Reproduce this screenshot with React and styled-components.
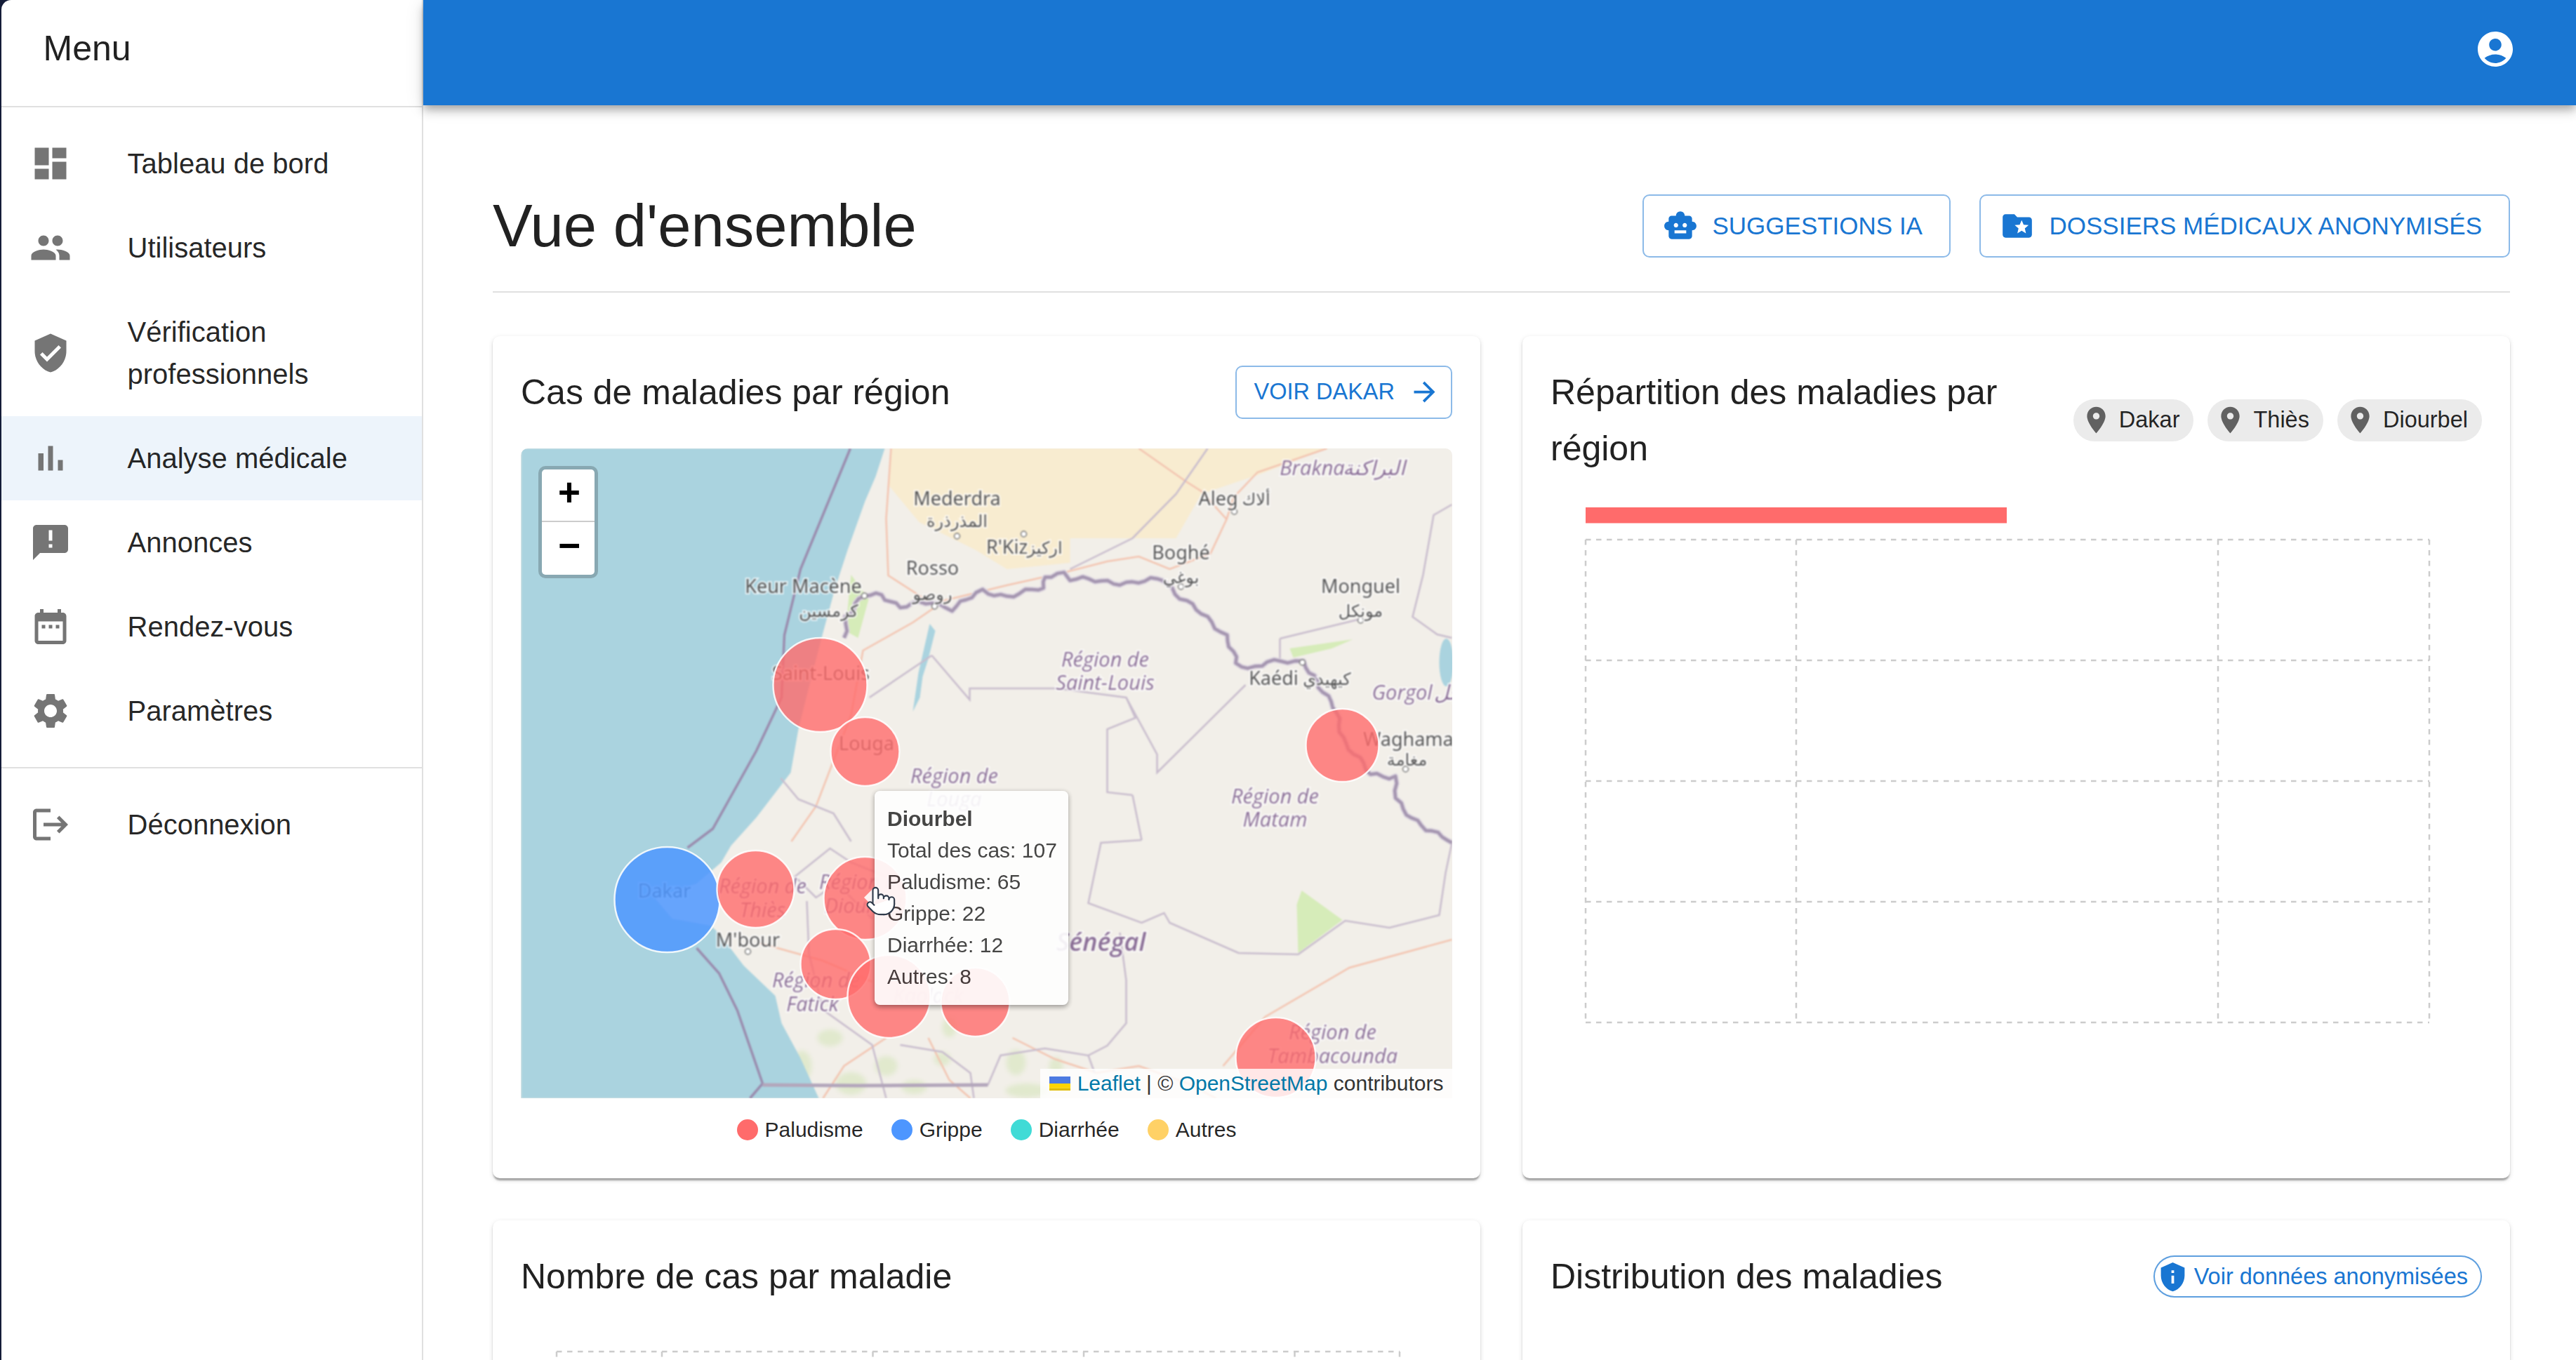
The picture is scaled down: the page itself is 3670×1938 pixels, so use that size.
import styled, { createGlobalStyle } from "styled-components";
import { Pointer } from "lucide-react";

const GlobalStyle = createGlobalStyle`
    html, body {
        margin: 0;
        padding: 0;
        height: 100%;
        background: #141c38;
        font-family: "Liberation Sans", Arial, sans-serif;
        overflow: hidden;
    }
`;

const BLUE = "#1976d2";

const Page = styled.div`
    display: flex;
    height: 1938px;
    margin-left: 1.5px;
    background: #fff;
    border-top-left-radius: 14px;
    overflow: hidden;
`;
const Sidebar = styled.aside`
    flex: 0 0 601.5px;
    box-sizing: border-box;
    border-right: 2.5px solid rgba(0, 0, 0, 0.12);
    color: rgba(0, 0, 0, 0.87);
`;
const MenuHead = styled.div`
    box-sizing: border-box;
    height: 152.5px;
    padding: 0 0 12.5px 60px;
    display: flex;
    align-items: center;
    font-size: 50px;
    border-bottom: 2.5px solid rgba(0, 0, 0, 0.12);
`;
const NavList = styled.nav`
    padding: 20px 0;
    border-bottom: ${(p) => (p.$last ? "none" : "2.5px solid rgba(0, 0, 0, 0.12)")};
`;
const NavItem = styled.div`
    display: flex;
    align-items: center;
    min-height: 120px;
    box-sizing: border-box;
    padding: 30px 40px;
    background: ${(p) => (p.$active ? "#edf4fb" : "transparent")};
`;
const NavIcon = styled.svg`
    flex: 0 0 60px;
    width: 60px;
    height: 60px;
    margin-right: 80px;
    fill: #757575;
`;
const NavText = styled.span`
    flex: 1;
    font-size: 40px;
    line-height: 60px;
`;

const Main = styled.main`
    flex: 1;
    min-width: 0;
    display: flex;
    flex-direction: column;
`;
const AppBar = styled.header`
    flex: 0 0 150px;
    box-sizing: border-box;
    background: ${BLUE};
    display: flex;
    justify-content: flex-end;
    padding: 40px 85px 0 0;
    box-shadow: 0 5px 10px -2.5px rgba(0, 0, 0, 0.2), 0 10px 12.5px 0 rgba(0, 0, 0, 0.14),
        0 2.5px 25px 0 rgba(0, 0, 0, 0.12);
    position: relative;
    z-index: 2;
`;
const AccountIcon = styled.svg`
    width: 60px;
    height: 60px;
    fill: #fff;
`;
const Content = styled.div`
    padding: 127px 94px 0 99px;
`;
const TitleRow = styled.div`
    display: flex;
    align-items: center;
    justify-content: space-between;
    padding-bottom: 48px;
    border-bottom: 2.5px solid rgba(0, 0, 0, 0.12);
    margin-bottom: 61.5px;
`;
const PageTitle = styled.h1`
    margin: 0;
    font-size: 85px;
    font-weight: 400;
    line-height: 90px;
    color: rgba(0, 0, 0, 0.87);
`;
const Actions = styled.div`
    display: flex;
    gap: 41px;
`;
const OutlineButton = styled.div`
    display: inline-flex;
    align-items: center;
    box-sizing: border-box;
    height: ${(p) => (p.$small ? "76px" : "90px")};
    padding: ${(p) => (p.$small ? "0 25px" : "0 38px 0 37.5px")};
    border: 2.5px solid rgba(25, 118, 210, 0.5);
    border-radius: 10px;
    color: ${BLUE};
    font-size: ${(p) => (p.$small ? "32.5px" : "35px")};
    white-space: nowrap;
`;
const ButtonIcon = styled.svg`
    width: 50px;
    height: 50px;
    margin: 0 20px 0 -10px;
    fill: ${BLUE};
`;
const ArrowIcon = styled.svg`
    width: 45px;
    height: 45px;
    margin: 0 -10px 0 20px;
    fill: ${BLUE};
`;

const CardGrid = styled.div`
    display: grid;
    grid-template-columns: 1fr 1fr;
    gap: 60px;
`;
const Card = styled.section`
    height: 1200.5px;
    box-sizing: border-box;
    padding: 40px;
    background: #fff;
    border-radius: 10px;
    box-shadow: 0 5px 2.5px -2.5px rgba(0, 0, 0, 0.2), 0 2.5px 2.5px 0 rgba(0, 0, 0, 0.14),
        0 2.5px 7.5px 0 rgba(0, 0, 0, 0.12);
`;
const CardHead = styled.div`
    display: flex;
    align-items: center;
    justify-content: space-between;
    gap: 40px;
    margin-bottom: 40px;
`;
const CardTitle = styled.h2`
    margin: 0;
    font-size: 50px;
    font-weight: 400;
    line-height: 80px;
    color: rgba(0, 0, 0, 0.87);
`;
const ChipRow = styled.div`
    display: flex;
    gap: 20px;
    flex-shrink: 0;
`;
const Chip = styled.div`
    display: inline-flex;
    align-items: center;
    box-sizing: border-box;
    height: 60px;
    border-radius: 30px;
    font-size: 32.5px;
    white-space: nowrap;
    padding-right: ${(p) => (p.$outlined ? "18px" : "20px")};
    background: ${(p) => (p.$outlined ? "#fff" : "#ebebeb")};
    color: ${(p) => (p.$outlined ? BLUE : "rgba(0, 0, 0, 0.87)")};
    border: ${(p) => (p.$outlined ? "2.5px solid rgba(25, 118, 210, 0.7)" : "none")};
`;
const ChipIcon = styled.svg`
    width: 45px;
    height: 45px;
    margin: 0 ${(p) => (p.$outlined ? "8px" : "10px")} 0 ${(p) => (p.$outlined ? "3px" : "10px")};
    fill: ${(p) => (p.$outlined ? BLUE : "#616161")};
`;

const MapBox = styled.div`
    position: relative;
    height: 926px;
    overflow: hidden;
    border-radius: 10px 10px 0 0;
    background: #f2efe9;
`;
const MapSvg = styled.svg`
    display: block;
    width: 100%;
    height: 100%;
`;
const TileLayer = styled.g`
    filter: blur(0.9px);
`;
const GreenPatches = styled.g`
    filter: blur(3px);
    opacity: 0.65;
`;
const TownLabel = styled.text`
    font-family: ${(p) => (p.$ar ? '"DejaVu Sans", sans-serif' : '"Noto Sans", sans-serif')};
    font-size: ${(p) => (p.$ar ? "24px" : "27px")};
    fill: #555;
    stroke: rgba(255, 255, 255, 0.7);
    stroke-width: 4px;
    paint-order: stroke;
    text-anchor: middle;
`;
const RegionLabel = styled.text`
    font-family: "Open Sans", sans-serif;
    font-style: italic;
    font-size: ${(p) => p.$size || 29}px;
    font-weight: ${(p) => (p.$strong ? 600 : 400)};
    fill: #8b6f97;
    stroke: rgba(255, 255, 255, 0.7);
    stroke-width: 4px;
    paint-order: stroke;
    text-anchor: middle;
`;
const ZoomControl = styled.div`
    position: absolute;
    left: 25px;
    top: 25px;
    width: 75px;
    border: 5px solid rgba(0, 0, 0, 0.2);
    border-radius: 10px;
    background: #fff;
    background-clip: padding-box;
`;
const ZoomButton = styled.div`
    height: 75px;
    box-sizing: border-box;
    display: flex;
    align-items: center;
    justify-content: center;
    padding-left: 3px;
    font-family: "Liberation Mono", monospace;
    font-weight: 700;
    font-size: 55px;
    color: #000;
    border-bottom: ${(p) => (p.$top ? "2.5px solid #ccc" : "none")};
`;
const Attribution = styled.div`
    position: absolute;
    right: 0;
    bottom: 0;
    height: 42px;
    display: flex;
    align-items: center;
    padding: 0 12.5px;
    background: rgba(255, 255, 255, 0.8);
    font-size: 30px;
    line-height: 42px;
    color: #333;
    white-space: pre;
`;
const AttrLink = styled.span`
    color: #0078a8;
`;
const Flag = styled.svg`
    width: 30px;
    height: 20px;
    margin-right: 10px;
`;
const Tooltip = styled.div`
    position: absolute;
    left: 504px;
    top: 488px;
    width: 276px;
    height: 305px;
    box-sizing: border-box;
    padding: 17.5px 18px;
    background: #fff;
    border-radius: 7.5px;
    box-shadow: 0 2.5px 7.5px rgba(0, 0, 0, 0.4);
    opacity: 0.9;
    color: #333;
    font-size: 30px;
    line-height: 45px;
    white-space: nowrap;
    &::before {
        content: "";
        position: absolute;
        left: -15px;
        top: 137px;
        border: solid transparent;
        border-width: 15px 15px 15px 0;
        border-right-color: #fff;
    }
`;
const TooltipName = styled.div`
    font-weight: 700;
`;
const HandCursor = styled.div`
    position: absolute;
    left: 490px;
    top: 622px;
    line-height: 0;
`;
const Legend = styled.div`
    display: flex;
    justify-content: center;
    gap: 40px;
    margin-top: 30px;
`;
const LegendItem = styled.div`
    display: flex;
    align-items: center;
    gap: 10px;
    font-size: 30px;
    line-height: 30px;
    color: rgba(0, 0, 0, 0.87);
`;
const LegendDot = styled.span`
    width: 30px;
    height: 30px;
    border-radius: 50%;
    background: ${(p) => p.$color};
`;
const ChartSvg = styled.svg`
    display: block;
    margin-left: ${(p) => p.$left}px;
    margin-top: ${(p) => p.$top || 0}px;
    overflow: visible;
`;
const GridLine = styled.line`
    stroke: #ccc;
    stroke-width: 2.5px;
    stroke-dasharray: 7.5 7.5;
`;

const icons = {
    dashboard: "M3 13h8V3H3v10zm0 8h8v-6H3v6zm10 0h8V11h-8v10zm0-18v6h8V3h-8z",
    people: "M16 11c1.66 0 2.99-1.34 2.99-3S17.66 5 16 5c-1.66 0-3 1.34-3 3s1.34 3 3 3zm-8 0c1.66 0 2.99-1.34 2.99-3S9.66 5 8 5C6.34 5 5 6.34 5 8s1.34 3 3 3zm0 2c-2.33 0-7 1.17-7 3.5V19h14v-2.5c0-2.33-4.67-3.5-7-3.5zm8 0c-.29 0-.62.02-.97.05 1.16.84 1.97 1.97 1.97 3.45V19h6v-2.5c0-2.33-4.67-3.5-7-3.5z",
    verified: "M12 1 3 5v6c0 5.55 3.84 10.74 9 12 5.16-1.26 9-6.45 9-12V5l-9-4zm-2 16-4-4 1.41-1.41L10 14.17l6.59-6.59L18 9l-8 8z",
    bars: "M5 9.2h3V19H5zM10.6 5h2.8v14h-2.8zm5.6 8H19v6h-2.8z",
    announce: "M20 2H4c-1.1 0-1.99.9-1.99 2L2 22l4-4h14c1.1 0 2-.9 2-2V4c0-1.1-.9-2-2-2zm-7 9h-2V5h2v6zm0 4h-2v-2h2v2z",
    event: "M9 11H7v2h2v-2zm4 0h-2v2h2v-2zm4 0h-2v2h2v-2zm2-7h-1V2h-2v2H8V2H6v2H5c-1.11 0-1.99.9-1.99 2L3 20c0 1.1.89 2 2 2h14c1.1 0 2-.9 2-2V6c0-1.1-.9-2-2-2zm0 16H5V9h14v11z",
    settings: "M19.14 12.94c.04-.3.06-.61.06-.94 0-.32-.02-.64-.07-.94l2.03-1.58c.18-.14.23-.41.12-.61l-1.92-3.32c-.12-.22-.37-.29-.59-.22l-2.39.96c-.5-.38-1.03-.7-1.62-.94l-.36-2.54c-.04-.24-.24-.41-.48-.41h-3.84c-.24 0-.43.17-.47.41l-.36 2.54c-.59.24-1.13.57-1.62.94l-2.39-.96c-.22-.08-.47 0-.59.22L2.74 8.87c-.12.21-.08.47.12.61l2.03 1.58c-.05.3-.09.63-.09.94s.02.64.07.94l-2.03 1.58c-.18.14-.23.41-.12.61l1.92 3.32c.12.22.37.29.59.22l2.39-.96c.5.38 1.03.7 1.62.94l.36 2.54c.05.24.24.41.48.41h3.84c.24 0 .44-.17.47-.41l.36-2.54c.59-.24 1.13-.56 1.62-.94l2.39.96c.22.08.47 0 .59-.22l1.92-3.32c.12-.22.07-.47-.12-.61l-2.01-1.58zM12 15.6c-1.98 0-3.6-1.62-3.6-3.6s1.62-3.6 3.6-3.6 3.6 1.62 3.6 3.6-1.62 3.6-3.6 3.6z",
    logout: "m17 7-1.41 1.41L18.17 11H8v2h10.17l-2.58 2.58L17 17l5-5zM4 5h8V3H4c-1.1 0-2 .9-2 2v14c0 1.1.9 2 2 2h8v-2H4V5z",
    account: "M12 2C6.48 2 2 6.48 2 12s4.48 10 10 10 10-4.48 10-10S17.52 2 12 2zm0 4c1.93 0 3.5 1.57 3.5 3.5S13.93 13 12 13s-3.5-1.57-3.5-3.5S10.07 6 12 6zm0 14c-2.03 0-4.43-.82-6.14-2.88C7.55 15.8 9.68 15 12 15s4.45.8 6.14 2.12C16.43 19.18 14.03 20 12 20z",
    robot: "M20 9V7c0-1.1-.9-2-2-2h-3c0-1.66-1.34-3-3-3S9 3.34 9 5H6c-1.1 0-2 .9-2 2v2c-1.66 0-3 1.34-3 3s1.34 3 3 3v4c0 1.1.9 2 2 2h12c1.1 0 2-.9 2-2v-4c1.66 0 3-1.34 3-3s-1.34-3-3-3zM7.5 11.5C7.5 10.67 8.17 10 9 10s1.5.67 1.5 1.5S9.83 13 9 13s-1.5-.67-1.5-1.5zM16 17H8v-2h8v2zm-1-4c-.83 0-1.5-.67-1.5-1.5S14.17 10 15 10s1.5.67 1.5 1.5S15.83 13 15 13z",
    folder: "M20 6h-8l-2-2H4c-1.1 0-1.99.9-1.99 2L2 18c0 1.1.9 2 2 2h16c1.1 0 2-.9 2-2V8c0-1.1-.9-2-2-2zm-2.06 11L15 15.28 12.06 17l.78-3.33-2.59-2.24 3.41-.29L15 8l1.34 3.14 3.41.29-2.59 2.24.78 3.33z",
    arrow: "m12 4-1.41 1.41L16.17 11H4v2h12.17l-5.58 5.59L12 20l8-8z",
    pin: "M12 2C8.13 2 5 5.13 5 9c0 5.25 7 13 7 13s7-7.75 7-13c0-3.87-3.13-7-7-7zm0 9.5c-1.38 0-2.5-1.12-2.5-2.5s1.12-2.5 2.5-2.5 2.5 1.12 2.5 2.5-1.12 2.5-2.5 2.5z",
    privacy: "M12 1 3 5v6c0 5.55 3.84 10.74 9 12 5.16-1.26 9-6.45 9-12V5l-9-4zm1 16h-2v-6h2v6zm0-8h-2V7h2v2z",
};

const navTop = [
    { icon: "dashboard", label: "Tableau de bord" },
    { icon: "people", label: "Utilisateurs" },
    { icon: "verified", label: "Vérification professionnels" },
    { icon: "bars", label: "Analyse médicale", active: true },
    { icon: "announce", label: "Annonces" },
    { icon: "event", label: "Rendez-vous" },
    { icon: "settings", label: "Paramètres" },
];

const NavEntry = ({ icon, label, active }) => (
    <NavItem $active={active}>
        <NavIcon viewBox="0 0 24 24">
            <path d={icons[icon]} />
        </NavIcon>
        <NavText>{label}</NavText>
    </NavItem>
);

// map traced from the picture, coordinates are px inside the 1326x926 map
const path = (pts) => "M" + pts.map((p) => p.join(" ")).join("L");

// the river is a border with lots of small bends, so break up each stretch
const wiggle = (pts, amp) => {
    const out = [];
    let n = 0;
    pts.slice(0, -1).forEach(([x1, y1], i) => {
        const [x2, y2] = pts[i + 1];
        const len = Math.hypot(x2 - x1, y2 - y1);
        const steps = Math.max(1, Math.round(len / 9));
        for (let s = 0; s < steps; s++, n++) {
            const t = s / steps;
            const off = amp * (Math.sin(n * 1.7) + Math.sin(n * 0.63) * 0.7);
            out.push([x1 + (x2 - x1) * t - ((y2 - y1) / len) * off, y1 + (y2 - y1) * t + ((x2 - x1) / len) * off]);
        }
    });
    out.push(pts[pts.length - 1]);
    return path(out.map(([x, y]) => [x.toFixed(1), y.toFixed(1)]));
};

const sea = [
    [0, 0], [518, 0], [505, 40], [490, 75], [465, 145], [447, 200], [428, 270], [410, 340], [395, 400], [384, 462],
    [335, 526], [299, 566], [285, 590], [250, 620], [190, 640], [215, 670], [270, 680], [282, 691], [317, 737],
    [362, 780], [371, 819], [398, 869], [424, 926], [0, 926],
];
const desert = [
    [527, 0], [523, 52], [567, 105], [648, 145], [692, 172], [782, 163], [782, 128], [933, 128], [969, 65], [1049, 38], [1148, 0],
];
const maritime = [
    [[469, 0], [398, 172], [375, 266], [371, 355], [335, 431], [273, 542], [237, 569]],
    [[250, 712], [282, 748], [308, 801], [344, 905], [326, 926]],
];
const river = [
    [460, 270], [462, 240], [467, 235], [489, 210], [514, 208], [540, 226], [585, 219], [612, 228], [657, 204],
    [692, 210], [746, 199], [746, 181], [773, 177], [782, 186], [871, 192], [915, 186], [933, 206], [1005, 266],
    [1018, 306], [1036, 315], [1063, 302], [1112, 306], [1130, 324], [1157, 369], [1175, 420], [1210, 465],
    [1246, 467], [1246, 498], [1255, 516], [1291, 541], [1326, 562],
];
const borders = [
    [[978, 0], [933, 65], [871, 128], [782, 172]],
    [[1326, 80], [1300, 95], [1285, 180], [1270, 240], [1305, 265], [1326, 270]],
    [[1081, 271], [1192, 244]],
    [[1081, 271], [1081, 306]],
    [[585, 295], [639, 358], [639, 342], [764, 342], [862, 355], [875, 384], [835, 400], [835, 490], [871, 494]],
    [[862, 355], [906, 436], [906, 462], [1032, 337]],
    [[585, 295], [496, 355]],
    [[884, 558], [826, 562], [808, 648], [884, 676], [916, 662], [924, 676], [1022, 719], [1107, 721], [1174, 673], [1237, 683], [1308, 665], [1317, 605], [1326, 562]],
    [[853, 690], [862, 758], [862, 819], [835, 851], [808, 865]],
    [[871, 494], [884, 558]],
    [[500, 670], [450, 620], [420, 640], [390, 610], [440, 570], [470, 590], [520, 610]],
    [[407, 645], [410, 720], [430, 800], [500, 850], [520, 926]],
    [[540, 850], [600, 860], [640, 890], [645, 926]],
    [[665, 907], [683, 865], [746, 855], [808, 865], [817, 890]],
    [[370, 470], [395, 500], [445, 520], [470, 560]],
];
const gambia = [[344, 907], [480, 908], [665, 907]];
const roads = [
    [[880, 0], [947, 47], [969, 61], [1005, 101], [982, 150], [924, 172], [880, 154], [835, 161], [773, 177], [692, 195], [585, 221], [523, 181], [520, 100], [527, 0]],
    [[1148, 0], [1049, 34], [1015, 70], [1005, 101]],
    [[590, 226], [558, 248], [487, 288], [470, 380], [420, 510], [385, 560]],
    [[340, 705], [430, 730], [500, 760]],
    [[700, 840], [760, 870], [820, 890], [880, 880], [950, 905], [990, 926]],
    [[1000, 880], [1060, 810], [1180, 740], [1326, 700]],
    [[520, 840], [460, 880], [430, 926]],
    [[580, 840], [610, 900], [640, 926]],
];
const greens = [
    [[470, 180], [495, 215], [480, 270], [462, 260]],
    [[1100, 298], [1155, 285], [1185, 272], [1095, 285]],
    [[1112, 630], [1170, 672], [1107, 719], [1105, 650]],
];
const patches = [
    [400, 880, 14, 22], [440, 840, 18, 12], [470, 905, 22, 16], [520, 880, 16, 14], [560, 910, 18, 10],
    [600, 870, 12, 10], [705, 875, 14, 18], [720, 915, 30, 10], [762, 880, 10, 12], [610, 825, 10, 14],
];
const lake = [[582, 250], [590, 260], [580, 300], [572, 325], [568, 355], [558, 375], [566, 320]];

const towns = [
    { x: 621, y: 81, t: "Mederdra" },
    { x: 621, y: 112, t: "المذرذرة", ar: 1 },
    { x: 692, y: 150, t: "R'Kiz" },
    { x: 746, y: 150, t: "اركيز", ar: 1 },
    { x: 586, y: 180, t: "Rosso" },
    { x: 586, y: 216, t: "روصو", ar: 1 },
    { x: 402, y: 206, t: "Keur Macène" },
    { x: 438, y: 240, t: "كرمسين", ar: 1 },
    { x: 993, y: 81, t: "Aleg" },
    { x: 1047, y: 81, t: "ألاك", ar: 1 },
    { x: 940, y: 158, t: "Boghé" },
    { x: 940, y: 192, t: "بوغي", ar: 1 },
    { x: 1196, y: 206, t: "Monguel" },
    { x: 1196, y: 240, t: "مونكل", ar: 1 },
    { x: 1072, y: 337, t: "Kaédi" },
    { x: 1148, y: 337, t: "كيهيدي", ar: 1 },
    { x: 1264, y: 424, t: "Waghama" },
    { x: 1262, y: 452, t: "مغامة", ar: 1 },
    { x: 323, y: 710, t: "M'bour" },
    { x: 204, y: 640, t: "Dakar" },
    { x: 427, y: 330, t: "Saint-Louis" },
    { x: 492, y: 430, t: "Louga" },
];
const regions = [
    { x: 832, y: 311, t: "Région de" },
    { x: 832, y: 344, t: "Saint-Louis" },
    { x: 617, y: 477, t: "Région de" },
    { x: 617, y: 510, t: "Louga" },
    { x: 1074, y: 506, t: "Région de" },
    { x: 1074, y: 539, t: "Matam" },
    { x: 1127, y: 38, t: "Brakna" },
    { x: 1215, y: 38, t: "البراكنة" },
    { x: 1255, y: 358, t: "Gorgol" },
    { x: 1320, y: 358, t: "جل" },
    { x: 344, y: 634, t: "Région de" },
    { x: 344, y: 668, t: "Thiès" },
    { x: 487, y: 628, t: "Région de" },
    { x: 487, y: 662, t: "Diourbel" },
    { x: 420, y: 768, t: "Région de" },
    { x: 415, y: 802, t: "Fatick" },
    { x: 580, y: 790, t: "Kaolack" },
    { x: 1156, y: 842, t: "Région de" },
    { x: 1156, y: 876, t: "Tambacounda" },
    { x: 826, y: 716, t: "Sénégal", size: 36, strong: 1 },
];
const dots = [
    [621, 125], [716, 122], [589, 225], [489, 210], [1016, 90], [940, 197], [1196, 245], [1113, 305], [1260, 457], [323, 717],
];

const circles = [
    { x: 426, y: 337, r: 67 },
    { x: 490, y: 432, r: 49 },
    { x: 1170, y: 423, r: 52 },
    { x: 208, y: 643, r: 75, c: "#4d96ff" },
    { x: 334, y: 628, r: 55 },
    { x: 490, y: 641, r: 59 },
    { x: 448, y: 735, r: 50 },
    { x: 524, y: 781, r: 59 },
    { x: 647, y: 789, r: 49 },
    { x: 1075, y: 868, r: 57 },
];

const legend = [
    { c: "#ff6b6b", t: "Paludisme" },
    { c: "#4d96ff", t: "Grippe" },
    { c: "#40dbd6", t: "Diarrhée" },
    { c: "#ffd166", t: "Autres" },
];

function RegionMap() {
    return (
        <MapBox>
            <MapSvg viewBox="0 0 1326 926">
                <TileLayer>
                    <rect width="1326" height="926" fill="#f2efe9" />
                    <path d={path(desert) + "Z"} fill="#f8ecd0" />
                    {greens.map((g, i) => (
                        <path key={i} d={path(g) + "Z"} fill="#d6ecb9" />
                    ))}
                    <GreenPatches>
                        {patches.map(([cx, cy, rx, ry], i) => (
                            <ellipse key={i} cx={cx} cy={cy} rx={rx} ry={ry} fill="#d8e6bf" />
                        ))}
                    </GreenPatches>
                    <path d={path(sea) + "Z"} fill="#aad3df" />
                    <path d={path(lake) + "Z"} fill="#aad3df" />
                    <ellipse cx="1318" cy="305" rx="10" ry="34" fill="#aad3df" />
                    {roads.map((r, i) => (
                        <path key={i} d={path(r)} fill="none" stroke="#f3c4b0" strokeWidth="2.5" />
                    ))}
                    {borders.map((b, i) => (
                        <path key={i} d={path(b)} fill="none" stroke="#c8bccd" strokeWidth="2.5" />
                    ))}
                    {maritime.map((m, i) => (
                        <path key={i} d={path(m)} fill="none" stroke="#9a8cae" strokeWidth="3.5" />
                    ))}
                    <path d={path(gambia)} fill="none" stroke="#b3a6bb" strokeWidth="5" />
                    <path d={wiggle(river, 2.6)} fill="none" stroke="#ddd6e0" strokeWidth="8" strokeLinejoin="round" />
                    <path d={wiggle(river, 2.6)} fill="none" stroke="#a596b0" strokeWidth="4.5" strokeLinejoin="round" />
                    {dots.map(([x, y], i) => (
                        <circle key={i} cx={x} cy={y} r="4" fill="#fff" stroke="#777" strokeWidth="1.5" />
                    ))}
                    {towns.map((l) => (
                        <TownLabel key={l.t} x={l.x} y={l.y} $ar={l.ar}>
                            {l.t}
                        </TownLabel>
                    ))}
                    {regions.map((l) => (
                        <RegionLabel key={l.t + l.x} x={l.x} y={l.y} $size={l.size} $strong={l.strong}>
                            {l.t}
                        </RegionLabel>
                    ))}
                </TileLayer>
                {circles.map((c) => (
                    <circle
                        key={c.x}
                        cx={c.x}
                        cy={c.y}
                        r={c.r}
                        fill={c.c || "#ff6b6b"}
                        fillOpacity={c.c ? 0.85 : 0.8}
                        stroke="#fff"
                        strokeOpacity="0.85"
                        strokeWidth="2.5"
                    />
                ))}
            </MapSvg>
            <ZoomControl>
                <ZoomButton $top>+</ZoomButton>
                <ZoomButton>−</ZoomButton>
            </ZoomControl>
            <Attribution>
                <Flag viewBox="0 0 12 8">
                    <rect width="12" height="4" fill="#4c7be1" />
                    <rect y="4" width="12" height="2.7" fill="#ffd500" />
                    <rect y="6.7" width="12" height="1.3" fill="#e0bc00" />
                </Flag>
                <AttrLink>Leaflet</AttrLink> | © <AttrLink>OpenStreetMap</AttrLink> contributors
            </Attribution>
            <Tooltip>
                <TooltipName>Diourbel</TooltipName>
                <div>Total des cas: 107</div>
                <div>Paludisme: 65</div>
                <div>Grippe: 22</div>
                <div>Diarrhée: 12</div>
                <div>Autres: 8</div>
            </Tooltip>
            <HandCursor>
                <Pointer size={46} fill="#fff" stroke="#2f3a4a" strokeWidth={1.1} />
            </HandCursor>
        </MapBox>
    );
}

const gridRows = [0, 172, 344, 516, 688];
const gridCols = [0, 300, 901, 1202];
const lowerCols = [0, 150, 450.5, 751, 1051.5, 1201];

function App() {
    return (
        <>
            <GlobalStyle />
            <Page>
                <Sidebar>
                    <MenuHead>Menu</MenuHead>
                    <NavList>
                        {navTop.map((n) => (
                            <NavEntry key={n.label} {...n} />
                        ))}
                    </NavList>
                    <NavList $last>
                        <NavEntry icon="logout" label="Déconnexion" />
                    </NavList>
                </Sidebar>
                <Main>
                    <AppBar>
                        <AccountIcon viewBox="0 0 24 24">
                            <path d={icons.account} />
                        </AccountIcon>
                    </AppBar>
                    <Content>
                        <TitleRow>
                            <PageTitle>Vue d'ensemble</PageTitle>
                            <Actions>
                                <OutlineButton>
                                    <ButtonIcon viewBox="0 0 24 24">
                                        <path d={icons.robot} />
                                    </ButtonIcon>
                                    SUGGESTIONS IA
                                </OutlineButton>
                                <OutlineButton>
                                    <ButtonIcon viewBox="0 0 24 24">
                                        <path d={icons.folder} />
                                    </ButtonIcon>
                                    DOSSIERS MÉDICAUX ANONYMISÉS
                                </OutlineButton>
                            </Actions>
                        </TitleRow>
                        <CardGrid>
                            <Card>
                                <CardHead>
                                    <CardTitle>Cas de maladies par région</CardTitle>
                                    <OutlineButton $small>
                                        VOIR DAKAR
                                        <ArrowIcon viewBox="0 0 24 24">
                                            <path d={icons.arrow} />
                                        </ArrowIcon>
                                    </OutlineButton>
                                </CardHead>
                                <RegionMap />
                                <Legend>
                                    {legend.map((l) => (
                                        <LegendItem key={l.t}>
                                            <LegendDot $color={l.c} />
                                            {l.t}
                                        </LegendItem>
                                    ))}
                                </Legend>
                            </Card>
                            <Card>
                                <CardHead>
                                    <CardTitle>Répartition des maladies par région</CardTitle>
                                    <ChipRow>
                                        {["Dakar", "Thiès", "Diourbel"].map((c) => (
                                            <Chip key={c}>
                                                <ChipIcon viewBox="0 0 24 24">
                                                    <path d={icons.pin} />
                                                </ChipIcon>
                                                {c}
                                            </Chip>
                                        ))}
                                    </ChipRow>
                                </CardHead>
                                <ChartSvg $left={50} $top={44} width="1202" height="734" viewBox="0 0 1202 734">
                                    <rect width="600" height="22.5" fill="#ff6b6b" />
                                    {gridRows.map((y) => (
                                        <GridLine key={y} x1="0" x2="1202" y1={y + 46} y2={y + 46} />
                                    ))}
                                    {gridCols.map((x) => (
                                        <GridLine key={x} x1={x} x2={x} y1="46" y2="734" />
                                    ))}
                                </ChartSvg>
                            </Card>
                            <Card>
                                <CardHead>
                                    <CardTitle>Nombre de cas par maladie</CardTitle>
                                </CardHead>
                                <ChartSvg $left={51} $top={66} width="1201" height="40" viewBox="0 0 1201 40">
                                    <GridLine x1="0" x2="1201" y1="1" y2="1" />
                                    {lowerCols.map((x) => (
                                        <GridLine key={x} x1={x} x2={x} y1="1" y2="40" />
                                    ))}
                                </ChartSvg>
                            </Card>
                            <Card>
                                <CardHead>
                                    <CardTitle>Distribution des maladies</CardTitle>
                                    <Chip $outlined>
                                        <ChipIcon $outlined viewBox="0 0 24 24">
                                            <path d={icons.privacy} />
                                        </ChipIcon>
                                        Voir données anonymisées
                                    </Chip>
                                </CardHead>
                            </Card>
                        </CardGrid>
                    </Content>
                </Main>
            </Page>
        </>
    );
}

export default App;
